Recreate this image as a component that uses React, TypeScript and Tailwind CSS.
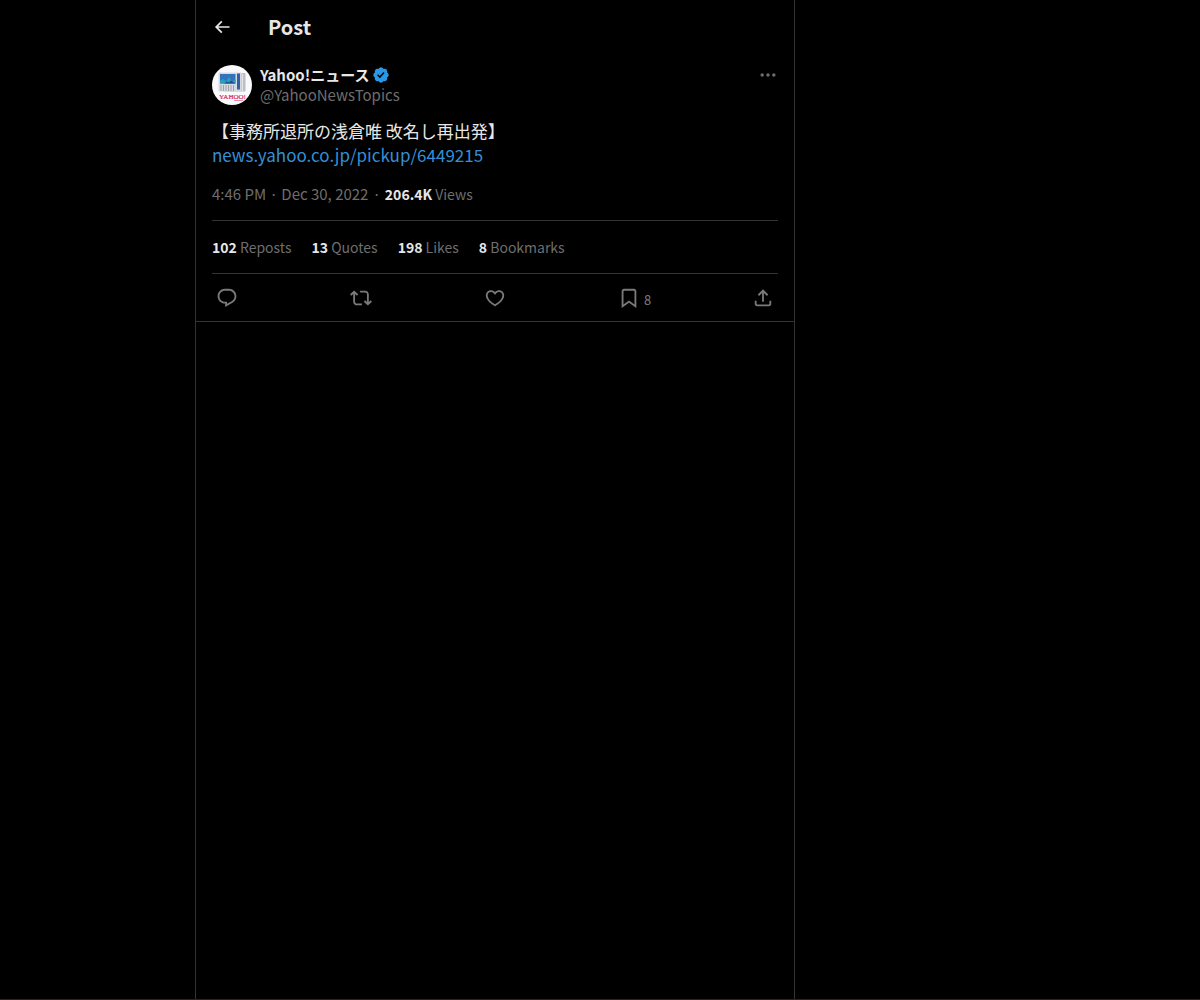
import { type ReactNode } from "react";

interface Stat {
  value: string;
  label: string;
}

const stats: Stat[] = [
  { value: "102", label: "Reposts" },
  { value: "13", label: "Quotes" },
  { value: "198", label: "Likes" },
  { value: "8", label: "Bookmarks" },
];

const actions = [
  {
    label: "Reply",
    d: "M1.751 10c0-4.42 3.584-8 8.005-8h4.366c4.49 0 8.129 3.64 8.129 8.13 0 2.96-1.607 5.68-4.196 7.11l-8.054 4.46v-3.69h-.067c-4.49.1-8.183-3.51-8.183-8.01zm8.005-6c-3.317 0-6.005 2.69-6.005 6 0 3.37 2.77 6.08 6.138 6.01l.351-.01h1.761v2.3l5.087-2.81c1.951-1.08 3.163-3.13 3.163-5.36 0-3.39-2.744-6.13-6.129-6.13H9.756z",
  },
  {
    label: "Repost",
    d: "M4.5 3.88l4.432 4.14-1.364 1.46L5.5 7.55V16c0 1.1.896 2 2 2H13v2H7.5c-2.209 0-4-1.79-4-4V7.55L1.432 9.48.068 8.02 4.5 3.88zM16.5 6H11V4h5.5c2.209 0 4 1.79 4 4v8.45l2.068-1.93 1.364 1.46-4.432 4.14-4.432-4.14 1.364-1.46 2.068 1.93V8c0-1.1-.896-2-2-2z",
  },
  {
    label: "Like",
    d: "M16.697 5.5c-1.222-.06-2.679.51-3.89 2.16l-.805 1.09-.806-1.09C9.984 6.01 8.526 5.44 7.304 5.5c-1.243.07-2.349.78-2.91 1.91-.552 1.12-.633 2.78.479 4.82 1.074 1.97 3.257 4.27 7.129 6.61 3.87-2.34 6.052-4.64 7.126-6.61 1.111-2.04 1.03-3.7.477-4.82-.561-1.13-1.666-1.84-2.908-1.91zm4.187 7.69c-1.351 2.48-4.001 5.12-8.379 7.67l-.503.3-.504-.3c-4.379-2.55-7.029-5.19-8.382-7.67-1.36-2.5-1.41-4.86-.514-6.67.887-1.79 2.647-2.91 4.601-3.01 1.651-.09 3.368.56 4.798 2.01 1.429-1.45 3.146-2.1 4.796-2.01 1.954.1 3.714 1.22 4.601 3.01.896 1.81.846 4.17-.514 6.67z",
  },
  {
    label: "Bookmark",
    count: "8",
    d: "M4 4.5C4 3.12 5.119 2 6.5 2h11C18.881 2 20 3.12 20 4.5v18.44l-8-5.71-8 5.71V4.5zM6.5 4c-.276 0-.5.22-.5.5v14.56l6-4.29 6 4.29V4.5c0-.28-.224-.5-.5-.5h-11z",
  },
  {
    label: "Share",
    d: "M12 2.59l5.7 5.7-1.41 1.42L13 6.41V16h-2V6.41l-3.3 3.3-1.41-1.42L12 2.59zM21 15l-.02 3.51c0 1.38-1.12 2.49-2.5 2.49H5.5C4.11 21 3 19.88 3 18.5V15h2v3.5c0 .28.22.5.5.5h12.98c.28 0 .5-.22.5-.5L19 15h2z",
  },
];

function Icon({ className, children }: { className: string; children: ReactNode }) {
  return (
    <svg viewBox="0 0 24 24" fill="currentColor" aria-hidden="true" className={className}>
      {children}
    </svg>
  );
}

function VerifiedBadge() {
  return (
    <svg viewBox="0 0 22 22" aria-label="Verified account" className="size-[18px] shrink-0 fill-[#2a97e4]">
      <path d="M20.396 11c-.018-.646-.215-1.275-.57-1.816-.354-.54-.852-.972-1.438-1.246.223-.607.27-1.264.14-1.897-.131-.634-.437-1.218-.882-1.687-.47-.445-1.053-.75-1.687-.882-.633-.13-1.29-.083-1.897.14-.273-.587-.704-1.086-1.245-1.44S11.647 1.62 11 1.604c-.646.017-1.273.213-1.813.568s-.969.854-1.24 1.44c-.608-.223-1.267-.272-1.902-.14-.635.13-1.22.436-1.69.882-.445.47-.749 1.055-.878 1.688-.13.633-.08 1.29.144 1.896-.587.274-1.087.705-1.443 1.245-.356.54-.555 1.17-.574 1.817.02.647.218 1.276.574 1.817.356.54.856.972 1.443 1.245-.224.606-.274 1.263-.144 1.896.13.634.433 1.218.877 1.688.47.443 1.054.747 1.687.878.633.132 1.29.084 1.897-.136.274.586.705 1.084 1.246 1.439.54.354 1.17.551 1.816.569.647-.016 1.276-.213 1.817-.567s.972-.854 1.245-1.44c.604.239 1.266.296 1.903.164.636-.132 1.22-.447 1.68-.907.46-.46.776-1.044.908-1.681s.075-1.299-.165-1.903c.586-.274 1.084-.705 1.439-1.246.354-.54.551-1.17.569-1.816zM9.662 14.85l-3.429-3.428 1.293-1.302 2.072 2.072 4.4-4.794 1.347 1.246z" />
    </svg>
  );
}

function Avatar() {
  return (
    <svg viewBox="0 0 40 40" aria-hidden="true" className="size-10 shrink-0 rounded-full">
      <rect width="40" height="40" fill="#fafafc" />
      <rect x="12" y="8" width="21.500" height="18.500" rx="1" fill="#bcbec4" />
      <rect x="6.500" y="7.500" width="23" height="19" rx="1" fill="#d5d9e0" />
      <rect x="8" y="9" width="15.500" height="9.500" fill="#3173bd" />
      <path d="M8 18.500v-3l3-1.500 3 2 3-4 3 4 3.500-1v3.500z" fill="#2c9dba" />
      <path d="M12 18.500l3-2 2 1 2-2 4.500 3z" fill="#1d4e93" />
      <path d="M9 20v6M11.500 20v6M14 20v6M16.500 20v6M19 20v6M21.500 20v6" stroke="#9da3ad" strokeWidth="1" />
      <rect x="25" y="8.500" width="3" height="16" fill="#2d619f" />
      <path d="M30.500 9v17" stroke="#e3e5e9" strokeWidth="1" />
      <text
        x="20.500"
        y="34"
        textAnchor="middle"
        fontSize="7"
        fontFamily="Liberation Serif, serif"
        fill="#cf2a58"
        stroke="#cf2a58"
        strokeWidth="0.2"
      >
        YAHOO!
      </text>
      <path d="M22 35.500h9" stroke="#e58ba4" strokeWidth="1" />
    </svg>
  );
}

export default function App() {
  return (
    <div className="flex min-h-screen justify-center border-b border-[#2c2224] bg-black font-['Noto_Sans_CJK_JP',sans-serif] text-[15px] leading-5 text-[#e7e7e7] lg:pr-[210px]">
      <main className="w-full max-w-[600px] border-x border-[#333333]">
        <header className="flex h-[53px] items-center px-4">
          <button type="button" aria-label="Back" className="mr-9 flex size-5">
            <Icon className="size-5">
              <path d="M7.414 13l5.043 5.04-1.414 1.42L3.586 12l7.457-7.46 1.414 1.42L7.414 11H21v2H7.414z" />
            </Icon>
          </button>
          <h1 className="text-xl leading-6 font-bold">Post</h1>
        </header>

        <article className="border-b border-[#333333] px-4 pt-3">
          <div className="flex gap-2">
            <Avatar />
            <div className="min-w-0 flex-1">
              <div className="flex items-center gap-0.5">
                <a href="#profile" className="font-bold">
                  Yahoo!ニュース
                </a>
                <VerifiedBadge />
              </div>
              <a href="#profile" className="text-[#6e6e6e]">
                @YahooNewsTopics
              </a>
            </div>
            <button type="button" aria-label="More" className="flex size-5 text-[#6e6e6e]">
              <Icon className="size-5">
                <path d="M3 12c0-1.100.9-2 2-2s2 .9 2 2-.9 2-2 2-2-.9-2-2zm9 2c1.100 0 2-.9 2-2s-.9-2-2-2-2 .9-2 2 .9 2 2 2zm7 0c1.100 0 2-.9 2-2s-.9-2-2-2-2 .9-2 2 .9 2 2 2z" />
              </Icon>
            </button>
          </div>

          <p className="mt-3.5 text-[17px] leading-6">
            【事務所退所の浅倉唯 改名し再出発】
            <br />
            <a href="#pickup" className="text-[#3490d6]">
              news.yahoo.co.jp/pickup/6449215
            </a>
          </p>

          <div className="mt-[17px] mb-4 flex gap-1 text-[#6e6e6e]">
            <time dateTime="2022-12-30T16:46">4:46 PM · Dec 30, 2022</time>
            <span>·</span>
            <span className="text-sm leading-5">
              <strong className="font-bold text-[#e7e7e7]">206.4K</strong> Views
            </span>
          </div>

          <div className="flex flex-wrap gap-x-5 border-y border-[#333333] py-4 text-sm leading-5">
            {stats.map((stat) => (
              <a key={stat.label} href="#stats" className="text-[#6e6e6e]">
                <strong className="font-bold text-[#e7e7e7]">{stat.value}</strong> {stat.label}
              </a>
            ))}
          </div>

          <div className="flex h-[47px] items-center justify-between px-1 text-[#7a7a7a]">
            {actions.map((action) => (
              <button key={action.label} type="button" aria-label={action.label} className="flex w-[22px] items-end">
                <Icon className="size-[22px] shrink-0">
                  <path d={action.d} />
                </Icon>
                {action.count && <span className="ml-1 text-[13px] leading-[18px]">{action.count}</span>}
              </button>
            ))}
          </div>
        </article>
      </main>
    </div>
  );
}
